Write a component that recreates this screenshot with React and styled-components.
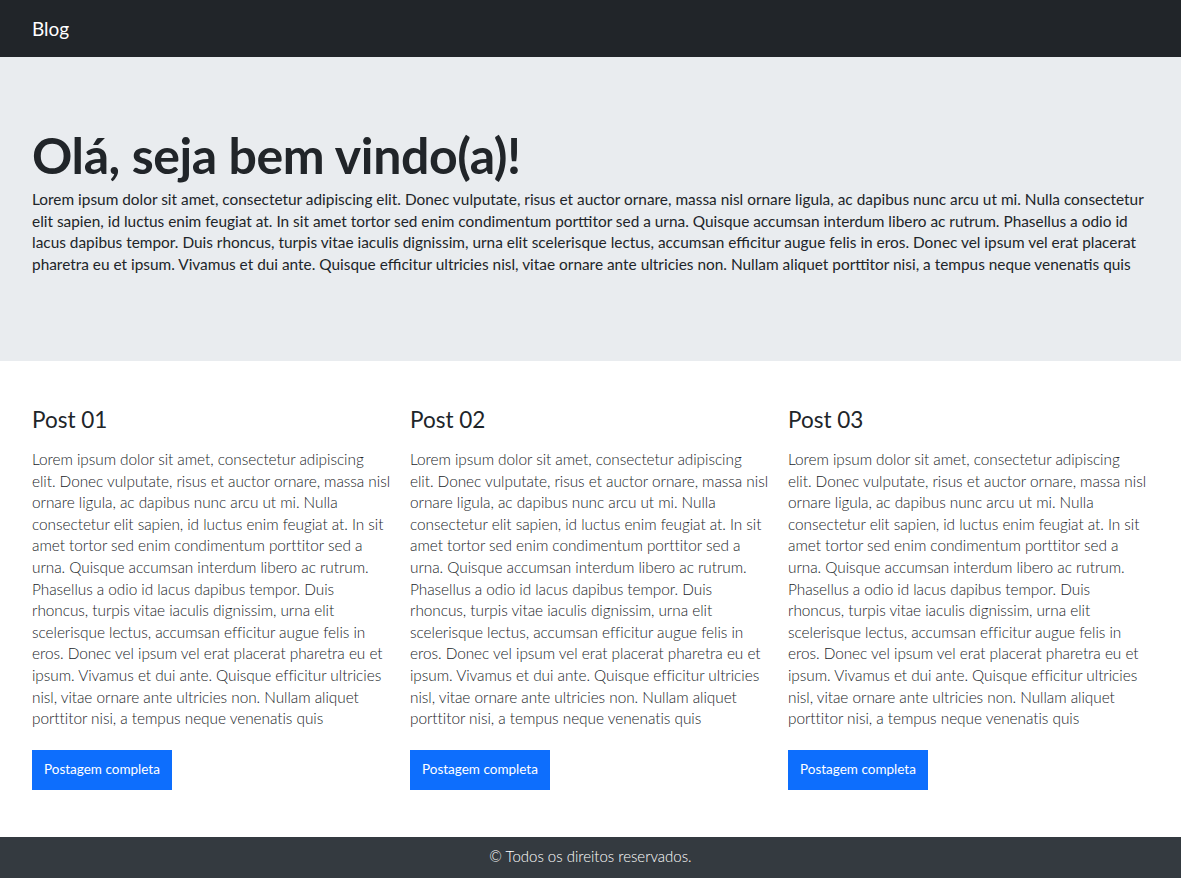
import React from "react";
import styled, { createGlobalStyle } from "styled-components";

const Global = createGlobalStyle`
  * { box-sizing: border-box; }
  html, body { margin: 0; padding: 0; }
  body {
    font-family: Lato, "Open Sans", sans-serif;
    color: #212529;
    background: #fff;
    font-size: 15.4px;
    line-height: 21.6px;
  }
`;

const Navbar = styled.nav`
  height: 57px;
  background: #212529;
  display: flex;
  align-items: center;
  padding: 0 32px;
`;

const Brand = styled.a`
  color: #fff;
  font-size: 19px;
  text-decoration: none;
`;

const Hero = styled.header`
  background: #e9ecef;
  height: 304px;
  padding: 68px 32px 0;
`;

const Title = styled.h1`
  margin: 0 0 4px;
  font-size: 50px;
  font-weight: 700;
  line-height: 60px;
  letter-spacing: -0.4px;
`;

const Lead = styled.p`
  margin: 0;
  font-size: 15.4px;
  line-height: 21.6px;
`;

const Posts = styled.main`
  display: grid;
  grid-template-columns: repeat(3, 358px);
  column-gap: 20px;
  padding: 44px 32px 47px;
`;

const Post = styled.article`
  display: flex;
  flex-direction: column;
  align-items: flex-start;
`;

const PostTitle = styled.h3`
  margin: 0 0 14px;
  font-size: 22.5px;
  font-weight: 400;
  line-height: 30px;
`;

const PostText = styled.p`
  margin: 0 0 20px;
  font-weight: 300;
  letter-spacing: -0.05px;
`;

const Button = styled.a`
  display: inline-flex;
  align-items: center;
  height: 40px;
  padding: 0 12px;
  background: #0d6efd;
  color: #fff;
  font-size: 13.5px;
  text-decoration: none;
`;

const Footer = styled.footer`
  height: 41px;
  background: #343a40;
  color: #fff;
  display: flex;
  align-items: center;
  justify-content: center;
  font-size: 15px;
  font-weight: 300;
`;

const lorem =
  "Lorem ipsum dolor sit amet, consectetur adipiscing elit. Donec vulputate, risus et auctor ornare, massa nisl ornare ligula, ac dapibus nunc arcu ut mi. Nulla consectetur elit sapien, id luctus enim feugiat at. In sit amet tortor sed enim condimentum porttitor sed a urna. Quisque accumsan interdum libero ac rutrum. Phasellus a odio id lacus dapibus tempor. Duis rhoncus, turpis vitae iaculis dignissim, urna elit scelerisque lectus, accumsan efficitur augue felis in eros. Donec vel ipsum vel erat placerat pharetra eu et ipsum. Vivamus et dui ante. Quisque efficitur ultricies nisl, vitae ornare ante ultricies non. Nullam aliquet porttitor nisi, a tempus neque venenatis quis";

const posts = ["Post 01", "Post 02", "Post 03"];

export default function App() {
  return (
    <>
      <Global />
      <Navbar>
        <Brand href="#">Blog</Brand>
      </Navbar>
      <Hero>
        <Title>Olá, seja bem vindo(a)!</Title>
        <Lead>{lorem}</Lead>
      </Hero>
      <Posts>
        {posts.map((p) => (
          <Post key={p}>
            <PostTitle>{p}</PostTitle>
            <PostText>{lorem}</PostText>
            <Button href="#">Postagem completa</Button>
          </Post>
        ))}
      </Posts>
      <Footer>© Todos os direitos reservados.</Footer>
    </>
  );
}
